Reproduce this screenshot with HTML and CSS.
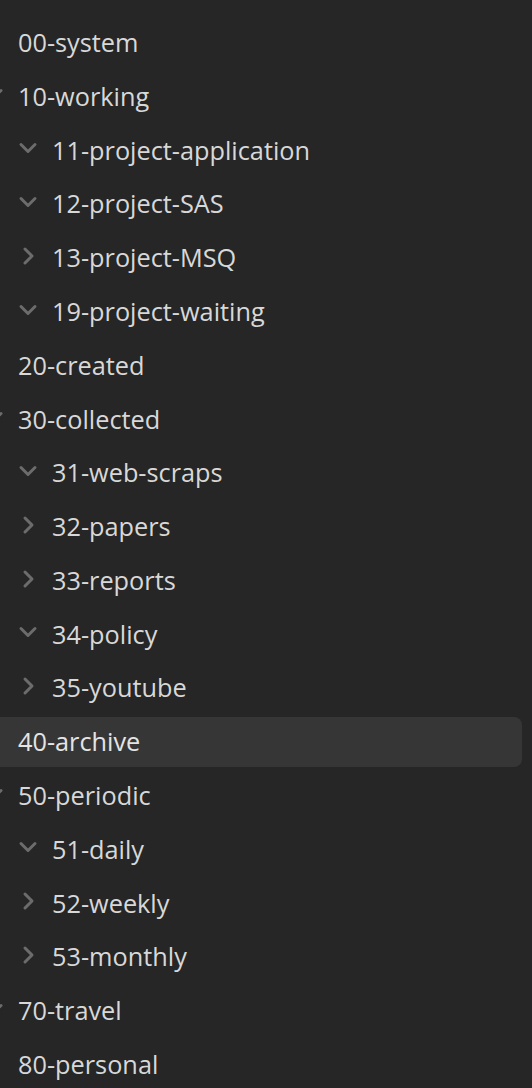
FILE: index.html
```html
<!DOCTYPE html>
<html>
<head>
<meta charset="utf-8">
<link rel="stylesheet" href="styles.css">
</head>
<body>
<div class="tree">
  <div class="row"><span class="chev"></span><span class="label">00-system</span></div>
  <div class="row"><span class="chev"><svg viewBox="0 0 20 20"><path d="M3 6.5 L10 13.5 L17 6.5"/></svg></span><span class="label">10-working</span></div>
  <div class="children">
    <div class="row"><span class="chev"><svg viewBox="0 0 20 20"><path d="M3 6.5 L10 13.5 L17 6.5"/></svg></span><span class="label">11-project-application</span></div>
    <div class="row"><span class="chev"><svg viewBox="0 0 20 20"><path d="M3 6.5 L10 13.5 L17 6.5"/></svg></span><span class="label">12-project-SAS</span></div>
    <div class="row"><span class="chev"><svg viewBox="0 0 20 20"><path d="M7 3 L14 10 L7 17"/></svg></span><span class="label">13-project-MSQ</span></div>
    <div class="row"><span class="chev"><svg viewBox="0 0 20 20"><path d="M3 6.5 L10 13.5 L17 6.5"/></svg></span><span class="label">19-project-waiting</span></div>
  </div>
  <div class="row"><span class="chev"></span><span class="label">20-created</span></div>
  <div class="row"><span class="chev"><svg viewBox="0 0 20 20"><path d="M3 6.5 L10 13.5 L17 6.5"/></svg></span><span class="label">30-collected</span></div>
  <div class="children">
    <div class="row"><span class="chev"><svg viewBox="0 0 20 20"><path d="M3 6.5 L10 13.5 L17 6.5"/></svg></span><span class="label">31-web-scraps</span></div>
    <div class="row"><span class="chev"><svg viewBox="0 0 20 20"><path d="M7 3 L14 10 L7 17"/></svg></span><span class="label">32-papers</span></div>
    <div class="row"><span class="chev"><svg viewBox="0 0 20 20"><path d="M7 3 L14 10 L7 17"/></svg></span><span class="label">33-reports</span></div>
    <div class="row"><span class="chev"><svg viewBox="0 0 20 20"><path d="M3 6.5 L10 13.5 L17 6.5"/></svg></span><span class="label">34-policy</span></div>
    <div class="row"><span class="chev"><svg viewBox="0 0 20 20"><path d="M7 3 L14 10 L7 17"/></svg></span><span class="label">35-youtube</span></div>
  </div>
  <div class="row active"><span class="chev"></span><span class="label">40-archive</span></div>
  <div class="row"><span class="chev"><svg viewBox="0 0 20 20"><path d="M3 6.5 L10 13.5 L17 6.5"/></svg></span><span class="label">50-periodic</span></div>
  <div class="children">
    <div class="row"><span class="chev"><svg viewBox="0 0 20 20"><path d="M3 6.5 L10 13.5 L17 6.5"/></svg></span><span class="label">51-daily</span></div>
    <div class="row"><span class="chev"><svg viewBox="0 0 20 20"><path d="M7 3 L14 10 L7 17"/></svg></span><span class="label">52-weekly</span></div>
    <div class="row"><span class="chev"><svg viewBox="0 0 20 20"><path d="M7 3 L14 10 L7 17"/></svg></span><span class="label">53-monthly</span></div>
  </div>
  <div class="row"><span class="chev"><svg viewBox="0 0 20 20"><path d="M3 6.5 L10 13.5 L17 6.5"/></svg></span><span class="label">70-travel</span></div>
  <div class="row"><span class="chev"></span><span class="label">80-personal</span></div>
</div>
</body>
</html>
```

FILE: styles.css
```css
html, body {
  margin: 0;
  padding: 0;
  background: #262626;
  overflow: hidden;
}
body {
  width: 532px;
  height: 1088px;
  font-family: "Open Sans", "Noto Sans", sans-serif;
  font-size: 25.3px;
  color: #d8d8d8;
}
.tree {
  margin-left: -34px;
  margin-right: 10px;
  padding-top: 17.7px;
  display: flex;
  flex-direction: column;
  gap: 3.79px;
}
.children {
  padding-left: 34px;
  display: flex;
  flex-direction: column;
  gap: 3.79px;
}
.row {
  display: flex;
  align-items: center;
  height: 50px;
  padding-left: 18px;
  border-radius: 8px;
}
.row.active {
  background: #363636;
  color: #e4e4e4;
}
.chev {
  width: 20px;
  height: 20px;
  flex: none;
  margin-right: 14px;
  margin-top: -4px;
}
.chev svg {
  display: block;
  width: 20px;
  height: 20px;
  fill: none;
  stroke: #6c6c6c;
  stroke-width: 3;
  stroke-linecap: round;
  stroke-linejoin: round;
}
.label {
  white-space: nowrap;
  line-height: 1;
}
```
